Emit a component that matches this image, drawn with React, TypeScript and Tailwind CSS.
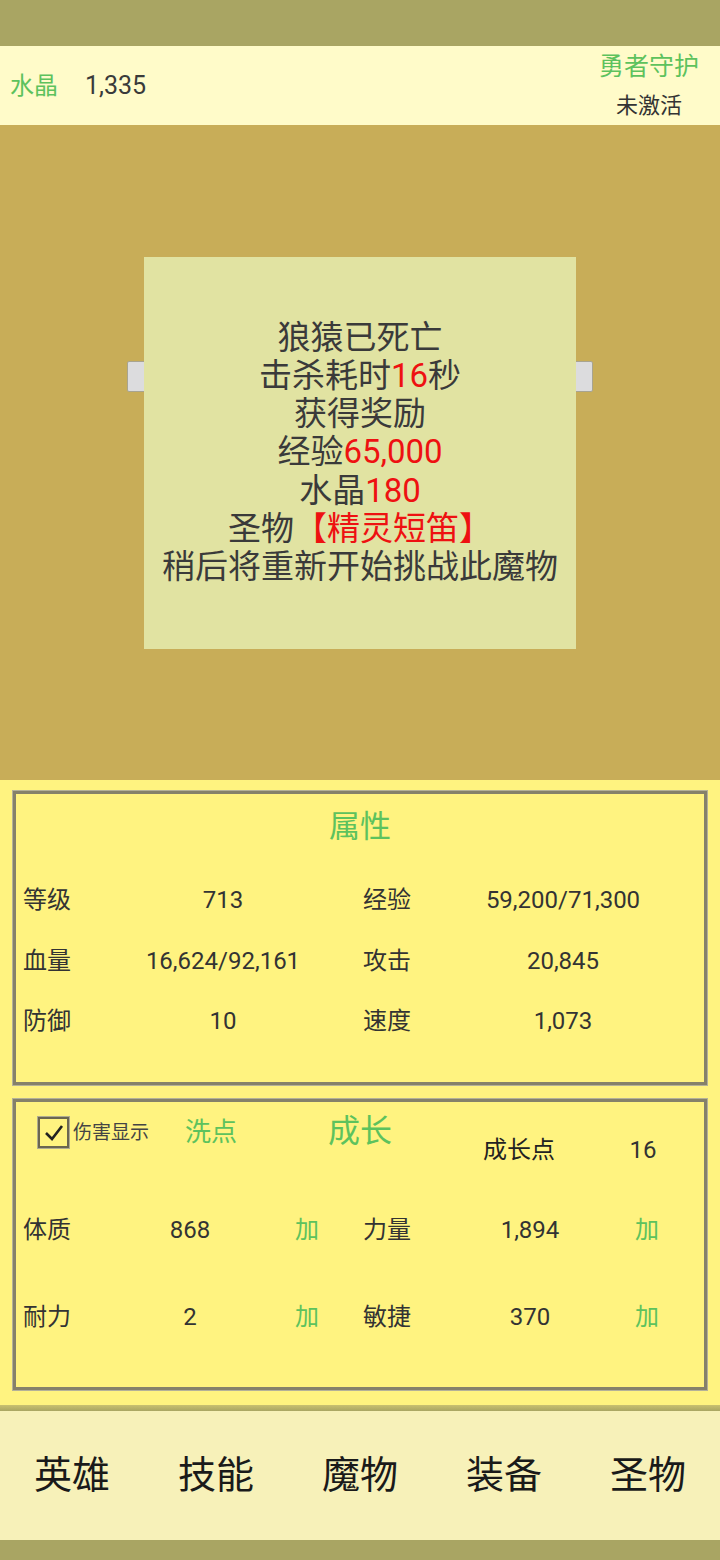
const font = "font-['Roboto','Noto_Sans_CJK_SC',sans-serif]"

const attrs = [
  ["等级", "713", "经验", "59,200/71,300"],
  ["血量", "16,624/92,161", "攻击", "20,845"],
  ["防御", "10", "速度", "1,073"],
]

const growth = [
  ["体质", "868", "力量", "1,894"],
  ["耐力", "2", "敏捷", "370"],
]

const tabs = ["英雄", "技能", "魔物", "装备", "圣物"]

function Panel({ children, className }: { children: React.ReactNode; className: string }) {
  return (
    <div className={`mx-[13px] border-[3px] border-[#85816a] shadow-[0_0_0_1px_#b4b198] ${className}`}>
      {children}
    </div>
  )
}

export default function App() {
  return (
    <div className={`w-[720px] h-[1560px] flex flex-col ${font} text-[#333]`}>
      <div className="h-[46px] bg-[#a9a563]" />

      <div className="h-[79px] bg-[#fffbc9] flex items-center justify-between pl-[10px] pr-[21px]">
        <div className="flex items-center">
          <span className="text-[24px] text-[#5dc25d]">水晶</span>
          <span className="ml-[27px] text-[25px] text-[#3a3a3a]">1,335</span>
        </div>
        <div className="flex flex-col items-center">
          <span className="text-[25px] leading-[39px] text-[#5dc25d]">勇者守护</span>
          <span className="text-[22px] leading-[39px] text-[#333]">未激活</span>
        </div>
      </div>

      <div className="h-[655px] bg-[#c8ad58] flex items-center justify-center">
        <div className="relative">
          <div className="absolute left-[-17px] right-[-17px] top-[104px] h-[31px] rounded-[2px] bg-[#dcdcde] border border-[#a8a490]" />
          <div className="relative w-[432px] h-[392px] bg-[#e1e3a2] flex flex-col items-center justify-center text-[33px] leading-[38.2px] text-[#3a3a3a]">
            <p>狼猿已死亡</p>
            <p>击杀耗时<span className="text-[#ee1111]">16</span>秒</p>
            <p>获得奖励</p>
            <p>经验<span className="text-[#ee1111]">65,000</span></p>
            <p>水晶<span className="text-[#ee1111]">180</span></p>
            <p>圣物<span className="text-[#ee1111]">【精灵短笛】</span></p>
            <p>稍后将重新开始挑战此魔物</p>
          </div>
        </div>
      </div>

      <div className="h-[625px] bg-[#fff380] pt-[11px] flex flex-col">
        <Panel className="h-[294px] px-[7px] pt-[13px]">
          <div className="text-center text-[31px] leading-[40px] text-[#5dc25d]">属性</div>
          <div className="mt-[23px] flex flex-col text-[24px]">
            {attrs.map(([l1, v1, l2, v2]) => (
              <div key={l1} className="h-[60.5px] flex items-center">
                <span className="w-[100px]">{l1}</span>
                <span className="w-[200px] text-center">{v1}</span>
                <span className="w-[40px]" />
                <span className="w-[100px]">{l2}</span>
                <span className="w-[200px] text-center">{v2}</span>
              </div>
            ))}
          </div>
        </Panel>

        <Panel className="mt-[14px] h-[291px] px-[7px]">
          <div className="h-[84px] grid grid-cols-[1fr_auto_1fr] items-start">
            <div className="flex items-start">
              <div className="ml-[15px] mt-[15px] w-[31px] h-[31px] border-2 border-[#6b6650] shadow-[0_0_0_1px_#b0ac90] flex items-center justify-center">
                <svg width="20" height="18" viewBox="0 0 20 18">
                  <path d="M2 9 L8 15 L18 2" fill="none" stroke="#222" strokeWidth="2.6" />
                </svg>
              </div>
              <span className="ml-[4px] mt-[19px] text-[19px] leading-[24px] text-[#444]">伤害显示</span>
              <span className="ml-[36px] mt-[14px] text-[26px] leading-[32px] text-[#5dc25d]">洗点</span>
            </div>
            <span className="mt-[9px] text-[32px] leading-[40px] text-[#5dc25d]">成长</span>
            <div className="flex items-start">
              <span className="ml-[91px] mt-[32px] text-[24px] leading-[32px] text-[#222]">成长点</span>
              <span className="ml-[38px] mt-[32px] w-[100px] text-center text-[24px] leading-[32px]">16</span>
            </div>
          </div>
          {growth.map(([l1, v1, l2, v2]) => (
            <div key={l1} className="h-[87px] flex items-center text-[24px]">
              <span className="w-[100px]">{l1}</span>
              <span className="w-[134px] text-center">{v1}</span>
              <span className="w-[100px] text-center text-[#5dc25d]">加</span>
              <span className="w-[6px]" />
              <span className="w-[100px]">{l2}</span>
              <span className="w-[134px] text-center">{v2}</span>
              <span className="w-[100px] text-center text-[#5dc25d]">加</span>
            </div>
          ))}
        </Panel>
      </div>

      <div className="h-[6px] bg-gradient-to-b from-[#c9c070] to-[#a9a563]" />
      <div className="h-[129px] bg-[#f7f1b9] grid grid-cols-5 items-center">
        {tabs.map((t) => (
          <span key={t} className="text-center text-[38px] text-[#1a1a1a]">{t}</span>
        ))}
      </div>
      <div className="h-[20px] bg-[#a9a563]" />
    </div>
  )
}
